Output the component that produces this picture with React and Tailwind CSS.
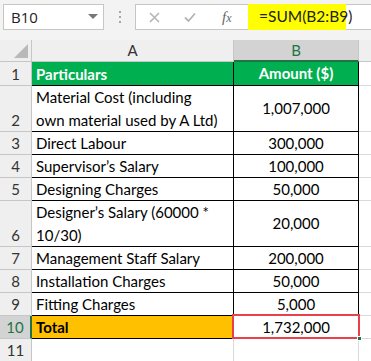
import React from "react";

const rows = [
  { n: 1, a: ["Particulars"], b: "Amount ($)", h: "h-[24px]", head: true },
  { n: 2, a: ["Material Cost (including", "own material used by A Ltd)"], b: "1,007,000", h: "h-[46px]" },
  { n: 3, a: ["Direct Labour"], b: "300,000", h: "h-[23px]" },
  { n: 4, a: ["Supervisor’s Salary"], b: "100,000", h: "h-[23px]" },
  { n: 5, a: ["Designing Charges"], b: "50,000", h: "h-[23px]" },
  { n: 6, a: ["Designer’s Salary (60000 *", "10/30)"], b: "20,000", h: "h-[46px]" },
  { n: 7, a: ["Management Staff Salary"], b: "200,000", h: "h-[23px]" },
  { n: 8, a: ["Installation Charges"], b: "50,000", h: "h-[23px]" },
  { n: 9, a: ["Fitting Charges"], b: "5,000", h: "h-[23px]" },
  { n: 10, a: ["Total"], b: "1,732,000", h: "h-[23px]", total: true },
];

function Row({ r }) {
  const multi = r.a.length > 1;
  let aCls = "bg-white text-black";
  let bCls = "bg-white text-black";
  if (r.head) {
    aCls = "bg-[#00b050] text-white font-bold";
    bCls = "bg-[#00b050] text-white font-bold";
  }
  if (r.total) aCls = "bg-[#ffc000] text-black font-bold";
  return (
    <div className={`flex ${r.h}`}>
      <div
        className={`w-[32px] shrink-0 flex items-end justify-center pb-[2px] text-[15px] leading-[18px] ${
          r.total
            ? "bg-[#d3d3d3] text-[#217346] border-r-2 border-r-[#217346] border-b border-b-[#c6c6c6]"
            : "bg-[#efefef] text-[#333] border-r border-b border-[#c6c6c6]"
        }`}
      >
        {r.n}
      </div>
      <div
        className={`w-[202px] shrink-0 border-r border-b border-black pl-[4px] flex flex-col ${
          multi ? "justify-start" : "justify-center"
        } ${aCls}`}
      >
        {r.a.map((t, i) => (
          <div key={i} className={`${multi ? "leading-[23px]" : "leading-[20px]"} text-[15px] whitespace-nowrap`}>
            {t}
          </div>
        ))}
      </div>
      <div
        className={`w-[125px] shrink-0 border-r border-b border-black flex items-center justify-center text-[15px] ${bCls}`}
      >
        {r.b}
      </div>
      <div className="flex-1 border-b border-[#d9d9d9] bg-white" />
    </div>
  );
}

export default function App() {
  return (
    <div
      className="relative w-[371px] h-[361px] overflow-hidden bg-white"
      style={{ fontFamily: "Lato, 'Open Sans', sans-serif" }}
    >
      {/* Toolbar */}
      <div className="h-[40px] bg-[#f3f3f3] flex items-start pt-[4px]">
        <div className="ml-[3px] w-[101px] h-[26px] bg-white border border-[#c6c6c6] flex items-center justify-between pl-[7px] pr-[5px]">
          <span className="text-[15px] text-[#222]" style={{ fontFamily: "'Open Sans', sans-serif" }}>
            B10
          </span>
          <svg width="10" height="6" viewBox="0 0 10 6">
            <polygon points="0,0 10,0 5,5" fill="#777" />
          </svg>
        </div>
        <div className="w-[31px] h-[26px] flex flex-col items-center justify-center gap-[3px]">
          <span className="w-[2px] h-[2px] bg-[#a6a6a6]" />
          <span className="w-[2px] h-[2px] bg-[#a6a6a6]" />
          <span className="w-[2px] h-[2px] bg-[#a6a6a6]" />
        </div>
        <div className="flex-1 h-[26px] bg-white border border-r-0 border-[#c6c6c6] flex items-stretch">
          <div className="w-[110px] flex items-center">
            <svg className="ml-[13px]" width="11" height="11" viewBox="0 0 11 11">
              <path d="M1 1 L10 10 M10 1 L1 10" stroke="#b5b5b5" strokeWidth="1.6" />
            </svg>
            <svg className="ml-[24px]" width="12" height="10" viewBox="0 0 12 10">
              <path d="M1 5.5 L4.5 9 L11 1.5" stroke="#b5b5b5" strokeWidth="1.8" fill="none" />
            </svg>
            <span
              className="ml-[26px] text-[15px] italic text-[#666]"
              style={{ fontFamily: "'Liberation Serif', serif" }}
            >
              f<span className="text-[12px]">x</span>
            </span>
          </div>
          <div className="ml-[2px] my-[-1px] w-[98px] bg-[#ffff00] flex items-center pl-[11px] text-[15.5px] text-[#222]">
            =SUM(B2:B9)
          </div>
        </div>
      </div>

      {/* Column headers */}
      <div className="flex h-[22px] text-[15px]">
        <div className="w-[32px] shrink-0 bg-[#efefef] border-r border-b border-[#c6c6c6] relative">
          <svg className="absolute right-[3px] bottom-[3px]" width="14" height="14" viewBox="0 0 14 14">
            <polygon points="14,0 14,14 0,14" fill="#b9b9b9" />
          </svg>
        </div>
        <div className="w-[202px] shrink-0 bg-[#efefef] border-r border-b border-[#c6c6c6] flex items-center justify-center text-[#333]">
          A
        </div>
        <div className="w-[125px] shrink-0 bg-[#d3d3d3] border-r border-[#c6c6c6] border-b-2 border-b-[#217346] flex items-center justify-center text-[#217346]">
          B
        </div>
        <div className="flex-1 bg-[#efefef] border-b border-[#c6c6c6]" />
      </div>

      {rows.map((r) => (
        <Row key={r.n} r={r} />
      ))}

      {/* Row 11 */}
      <div className="flex h-[23px]">
        <div className="w-[32px] shrink-0 bg-[#efefef] border-r border-b border-[#c6c6c6] flex items-end justify-center pb-[2px] text-[15px] leading-[18px] text-[#333]">
          11
        </div>
        <div className="w-[202px] shrink-0 border-r border-b border-[#d9d9d9]" />
        <div className="w-[125px] shrink-0 border-r border-b border-[#d9d9d9]" />
        <div className="flex-1 border-b border-[#d9d9d9]" />
      </div>

      {/* Annotation box around B10 */}
      <div className="absolute left-[232px] top-[314px] w-[128px] h-[25px] border-2 border-[#e8414b]" />
      <div className="absolute left-[357px] top-[336px] w-[5px] h-[5px] bg-[#217346] border border-white" />
    </div>
  );
}
